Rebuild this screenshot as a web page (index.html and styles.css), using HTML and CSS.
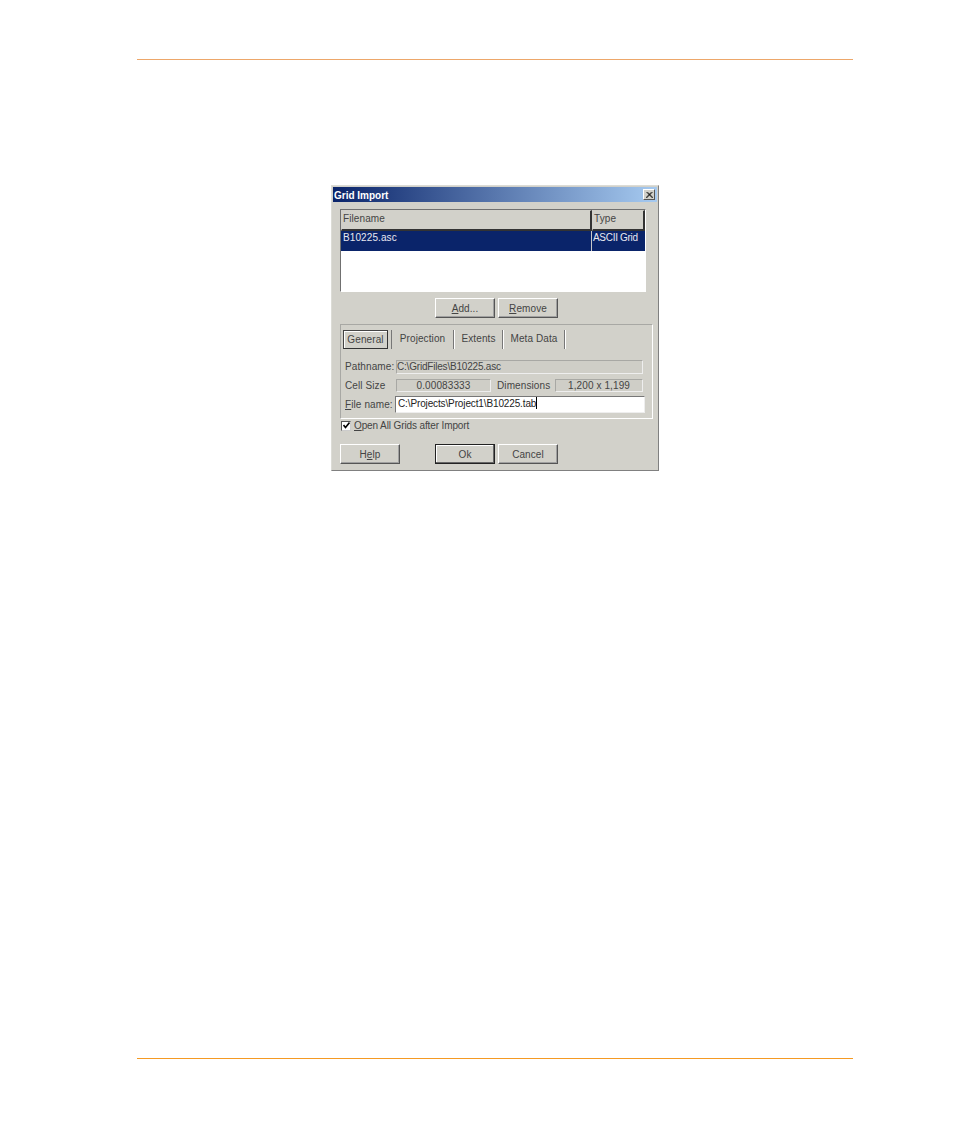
FILE: index.html
```html
<!DOCTYPE html>
<html lang="en">
<head>
<meta charset="utf-8">
<title>Grid Import</title>
<link rel="stylesheet" href="styles.css">
</head>
<body>
<div class="page">
  <hr class="rule rule-top">
  <div class="dialog-wrap">
    <section class="dialog">
      <header class="titlebar">
        <span class="title">Grid Import</span>
        <span class="close"><svg viewBox="0 0 8 7" width="8" height="7"><path d="M0.5 0 L7.5 7 M1.5 0 L8 6.5 M7.5 0 L0.5 7 M6.5 0 L0 6.5" stroke="#111" stroke-width="1" fill="none"/></svg></span>
      </header>
      <div class="body">
        <div class="list">
          <div class="list-head">
            <div class="hcell col-name">Filename</div>
            <div class="hcell col-type">Type</div>
          </div>
          <div class="list-row">
            <div class="rcell col-name">B10225.asc</div>
            <div class="rcell col-type">ASCII Grid</div>
          </div>
        </div>
        <div class="btn-row list-btns">
          <button class="btn"><u>A</u>dd...</button>
          <button class="btn"><u>R</u>emove</button>
        </div>
        <div class="group">
          <div class="tabs">
            <div class="tab tab-active">General</div>
            <div class="tab tab-projection">Projection</div>
            <div class="tab tab-extents">Extents</div>
            <div class="tab tab-meta">Meta Data</div>
          </div>
          <div class="form-row row-path">
            <label class="lbl">Pathname:</label>
            <div class="field field-wide">C:\GridFiles\B10225.asc</div>
          </div>
          <div class="form-row row-cell">
            <label class="lbl">Cell Size</label>
            <div class="field field-cell">0.00083333</div>
            <label class="lbl lbl-dim">Dimensions</label>
            <div class="field field-dim">1,200 x 1,199</div>
          </div>
          <div class="form-row row-file">
            <label class="lbl lbl-file"><u>F</u>ile name:</label>
            <div class="input">C:\Projects\Project1\B10225.tab<span class="caret"></span></div>
          </div>
        </div>
        <div class="check-row">
          <span class="check"><svg viewBox="0 0 7 7" width="7" height="7"><path d="M0.5 3 L2.5 5.5 L6.5 0.5" stroke="#000" stroke-width="1.6" fill="none"/></svg></span>
          <span class="check-label"><u>O</u>pen All Grids after Import</span>
        </div>
        <div class="btn-row bottom-btns">
          <button class="btn btn-help">H<u>e</u>lp</button>
          <button class="btn btn-default">Ok</button>
          <button class="btn">Cancel</button>
        </div>
      </div>
    </section>
  </div>
  <hr class="rule rule-bottom">
</div>
</body>
</html>
```
FILE: styles.css
```css
* { box-sizing: border-box; }
html, body { margin: 0; padding: 0; background: #fff; }
.page {
  width: 954px;
  height: 1133px;
  padding: 59px 101px 0 137px;
  font-family: "Liberation Sans", Arial, sans-serif;
}
.rule { margin: 0; border: 0; height: 1px; width: 716px; }
.rule-top { background: #eda76a; }
.rule-bottom { background: #f59a23; margin-top: 587px; }
.dialog-wrap { padding: 125px 0 0 194px; height: 411px; }
.dialog {
  width: 328px;
  height: 286px;
  background: #d2d1ca;
  border: 1px solid #808080;
  border-top-color: #dcdcd6;
  border-left-color: #dcdcd6;
  padding: 1px;
  color: #444;
  font-size: 10px;
  letter-spacing: 0.1px;
}
.titlebar {
  height: 15px;
  background: linear-gradient(90deg, #0a246a, #a6caf0);
  display: flex;
  align-items: center;
  justify-content: space-between;
  padding: 0 2px 0 1px;
}
.title { color: #fff; font-weight: bold; letter-spacing: 0; font-size: 10px; padding-top: 1px; }
.close {
  width: 12px; height: 11px;
  background: #d2d1ca;
  border: 1px solid #fff;
  border-right-color: #555;
  border-bottom-color: #555;
  display: flex; align-items: center; justify-content: center;
}
.close svg { width: 7px; height: 6px; }
.body { padding: 7px 0 0 7px; }
.list {
  width: 306px; height: 83px;
  background: #fff;
  border: 1px solid #fff;
  border-top-color: #707070;
  border-left-color: #707070;
}
.list-head { display: flex; height: 21px; }
.hcell {
  height: 21px;
  background: #d2d1ca;
  border: 1px solid #d2d1ca;
  border-right: 2px solid #333;
  border-bottom: 2px solid #333;
  padding: 2px 0 0 1px;
  line-height: 12px;
}
.list-row { display: flex; height: 20px; background: #0a246a; color: #e8e8f0; }
.rcell { line-height: 14px; padding: 0 0 0 2px; }
.col-name { width: 251px; }
.col-type { width: 53px; }
.rcell.col-name { border-right: 1px solid #c8c8c8; }
.rcell.col-type { padding-left: 1px; letter-spacing: -0.3px; }
.btn-row { display: flex; gap: 3px; }
.list-btns { padding: 6px 0 0 95px; }
.btn {
  width: 60px; height: 20px;
  padding: 0;
  background: #d2d1ca;
  border: 1px solid #fff;
  border-right-color: #555;
  border-bottom-color: #555;
  box-shadow: inset -1px -1px 0 #a0a0a0;
  font: inherit;
  letter-spacing: inherit;
  color: #444;
}
.group {
  width: 313px; height: 95px;
  margin-top: 6px;
  border: 1px solid #a8a8a4;
  border-right-color: #fff;
  border-bottom-color: #fff;
  padding: 5px 0 0 2px;
}
.tabs { display: flex; height: 19px; }
.tab {
  height: 19px;
  text-align: center;
  border-right: 1px solid #777;
  box-shadow: 1px 0 0 #fff;
  line-height: 17px;
}
.tab-active {
  width: 45px;
  border: 1px solid #444;
  border-right-color: #333;
  border-bottom-color: #333;
  box-shadow: inset 1px 1px 0 #fff;
  margin-right: 3px;
  line-height: 18px;
}
.tab-projection { width: 63px; border-left: 1px solid #777; margin-right: 1px; }
.tab-extents { width: 48px; margin-right: 1px; }
.tab-meta { width: 61px; }
.form-row { display: flex; align-items: center; }
.row-path { margin-top: 11px; height: 14px; }
.row-cell { margin-top: 5px; height: 13px; }
.row-file { margin-top: 4px; height: 17px; }
.lbl { width: 53px; padding-left: 2px; white-space: nowrap; line-height: 12px; }
.lbl-file { width: 52px; }
.lbl-dim { width: 64px; padding-left: 6px; }
.field {
  height: 100%;
  background: #cfcec7;
  border: 1px solid #a8a8a4;
  border-right-color: #eee;
  border-bottom-color: #eee;
  line-height: 12px;
  white-space: nowrap;
  overflow: hidden;
}
.field-wide { width: 247px; letter-spacing: -0.2px; }
.field-cell { width: 95px; text-align: center; }
.field-dim { width: 88px; text-align: center; }
.input {
  width: 250px; height: 17px;
  background: #fff;
  border: 1px solid #777;
  border-right-color: #eee;
  border-bottom-color: #eee;
  padding-left: 2px;
  line-height: 14px;
  letter-spacing: -0.13px;
  color: #222;
  white-space: nowrap;
}
.caret { display: inline-block; width: 1px; height: 12px; background: #000; vertical-align: -2px; }
.check-row { display: flex; align-items: center; gap: 3px; padding-left: 1px; height: 13px; }
.check {
  width: 10px; height: 10px;
  background: #fff;
  border: 1px solid #555;
  border-right-color: #ccc;
  border-bottom-color: #ccc;
  display: flex; align-items: center; justify-content: center;
}
.check-label { letter-spacing: -0.12px; }
.bottom-btns { padding-top: 12px; }
.btn-help { margin-right: 32px; }
.btn-default { border: 1px solid #222; box-shadow: inset -1px -1px 0 #666, inset 1px 1px 0 #fff; }
```
